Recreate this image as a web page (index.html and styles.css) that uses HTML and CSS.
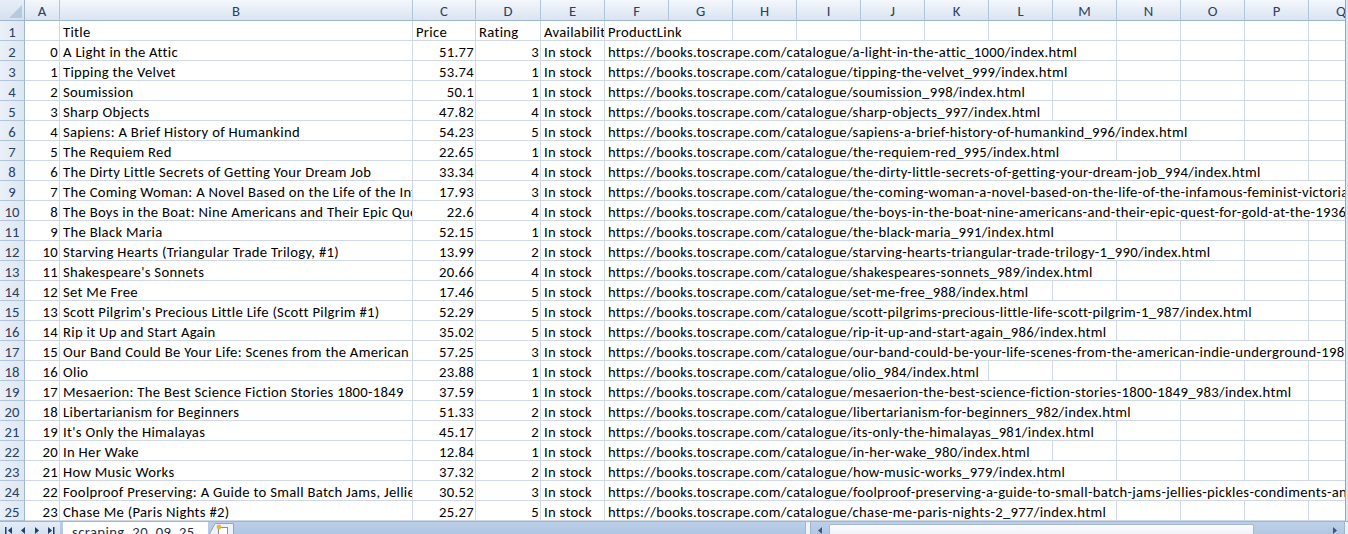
FILE: index.html
```html
<!DOCTYPE html>
<html>
<head>
<meta charset="utf-8">
<link rel="stylesheet" href="styles.css">
</head>
<body>
<div class="window">
  <div class="main">
    <div class="sheet">
      <div class="row head">
        <div class="corner"><span class="tri"></span></div>
        <div class="ch">A</div><div class="ch">B</div><div class="ch">C</div><div class="ch">D</div><div class="ch">E</div><div class="ch">F</div><div class="ch">G</div><div class="ch">H</div><div class="ch">I</div><div class="ch">J</div><div class="ch">K</div><div class="ch">L</div><div class="ch">M</div><div class="ch">N</div><div class="ch">O</div><div class="ch">P</div><div class="ch last">Q</div>
      </div>
      <div class="row"><div class="rh">1</div><div class="c num"></div><div class="c">Title</div><div class="c">Price</div><div class="c">Rating</div><div class="c">Availability</div><div class="rest"><span>ProductLink</span></div></div>
      <div class="row"><div class="rh">2</div><div class="c num">0</div><div class="c">A Light in the Attic</div><div class="c num">51.77</div><div class="c num">3</div><div class="c">In stock</div><div class="rest"><span>https://books.toscrape.com/catalogue/a-light-in-the-attic_1000/index.html</span></div></div>
      <div class="row"><div class="rh">3</div><div class="c num">1</div><div class="c">Tipping the Velvet</div><div class="c num">53.74</div><div class="c num">1</div><div class="c">In stock</div><div class="rest"><span>https://books.toscrape.com/catalogue/tipping-the-velvet_999/index.html</span></div></div>
      <div class="row"><div class="rh">4</div><div class="c num">2</div><div class="c">Soumission</div><div class="c num">50.1</div><div class="c num">1</div><div class="c">In stock</div><div class="rest"><span>https://books.toscrape.com/catalogue/soumission_998/index.html</span></div></div>
      <div class="row"><div class="rh">5</div><div class="c num">3</div><div class="c">Sharp Objects</div><div class="c num">47.82</div><div class="c num">4</div><div class="c">In stock</div><div class="rest"><span>https://books.toscrape.com/catalogue/sharp-objects_997/index.html</span></div></div>
      <div class="row"><div class="rh">6</div><div class="c num">4</div><div class="c">Sapiens: A Brief History of Humankind</div><div class="c num">54.23</div><div class="c num">5</div><div class="c">In stock</div><div class="rest"><span>https://books.toscrape.com/catalogue/sapiens-a-brief-history-of-humankind_996/index.html</span></div></div>
      <div class="row"><div class="rh">7</div><div class="c num">5</div><div class="c">The Requiem Red</div><div class="c num">22.65</div><div class="c num">1</div><div class="c">In stock</div><div class="rest"><span>https://books.toscrape.com/catalogue/the-requiem-red_995/index.html</span></div></div>
      <div class="row"><div class="rh">8</div><div class="c num">6</div><div class="c">The Dirty Little Secrets of Getting Your Dream Job</div><div class="c num">33.34</div><div class="c num">4</div><div class="c">In stock</div><div class="rest"><span>https://books.toscrape.com/catalogue/the-dirty-little-secrets-of-getting-your-dream-job_994/index.html</span></div></div>
      <div class="row"><div class="rh">9</div><div class="c num">7</div><div class="c">The Coming Woman: A Novel Based on the Life of the Infamous Feminist, Victoria Woodhull</div><div class="c num">17.93</div><div class="c num">3</div><div class="c">In stock</div><div class="rest"><span>https://books.toscrape.com/catalogue/the-coming-woman-a-novel-based-on-the-life-of-the-infamous-feminist-victoria-woodhull_993/index.html</span></div></div>
      <div class="row"><div class="rh">10</div><div class="c num">8</div><div class="c">The Boys in the Boat: Nine Americans and Their Epic Quest for Gold at the 1936 Berlin Olympics</div><div class="c num">22.6</div><div class="c num">4</div><div class="c">In stock</div><div class="rest"><span>https://books.toscrape.com/catalogue/the-boys-in-the-boat-nine-americans-and-their-epic-quest-for-gold-at-the-1936-berlin-olympics_992/index.html</span></div></div>
      <div class="row"><div class="rh">11</div><div class="c num">9</div><div class="c">The Black Maria</div><div class="c num">52.15</div><div class="c num">1</div><div class="c">In stock</div><div class="rest"><span>https://books.toscrape.com/catalogue/the-black-maria_991/index.html</span></div></div>
      <div class="row"><div class="rh">12</div><div class="c num">10</div><div class="c">Starving Hearts (Triangular Trade Trilogy, #1)</div><div class="c num">13.99</div><div class="c num">2</div><div class="c">In stock</div><div class="rest"><span>https://books.toscrape.com/catalogue/starving-hearts-triangular-trade-trilogy-1_990/index.html</span></div></div>
      <div class="row"><div class="rh">13</div><div class="c num">11</div><div class="c">Shakespeare's Sonnets</div><div class="c num">20.66</div><div class="c num">4</div><div class="c">In stock</div><div class="rest"><span>https://books.toscrape.com/catalogue/shakespeares-sonnets_989/index.html</span></div></div>
      <div class="row"><div class="rh">14</div><div class="c num">12</div><div class="c">Set Me Free</div><div class="c num">17.46</div><div class="c num">5</div><div class="c">In stock</div><div class="rest"><span>https://books.toscrape.com/catalogue/set-me-free_988/index.html</span></div></div>
      <div class="row"><div class="rh">15</div><div class="c num">13</div><div class="c">Scott Pilgrim's Precious Little Life (Scott Pilgrim #1)</div><div class="c num">52.29</div><div class="c num">5</div><div class="c">In stock</div><div class="rest"><span>https://books.toscrape.com/catalogue/scott-pilgrims-precious-little-life-scott-pilgrim-1_987/index.html</span></div></div>
      <div class="row"><div class="rh">16</div><div class="c num">14</div><div class="c">Rip it Up and Start Again</div><div class="c num">35.02</div><div class="c num">5</div><div class="c">In stock</div><div class="rest"><span>https://books.toscrape.com/catalogue/rip-it-up-and-start-again_986/index.html</span></div></div>
      <div class="row"><div class="rh">17</div><div class="c num">15</div><div class="c">Our Band Could Be Your Life: Scenes from the American Indie Underground, 1981-1991</div><div class="c num">57.25</div><div class="c num">3</div><div class="c">In stock</div><div class="rest"><span>https://books.toscrape.com/catalogue/our-band-could-be-your-life-scenes-from-the-american-indie-underground-1981-1991_985/index.html</span></div></div>
      <div class="row"><div class="rh">18</div><div class="c num">16</div><div class="c">Olio</div><div class="c num">23.88</div><div class="c num">1</div><div class="c">In stock</div><div class="rest"><span>https://books.toscrape.com/catalogue/olio_984/index.html</span></div></div>
      <div class="row"><div class="rh">19</div><div class="c num">17</div><div class="c">Mesaerion: The Best Science Fiction Stories 1800-1849</div><div class="c num">37.59</div><div class="c num">1</div><div class="c">In stock</div><div class="rest"><span>https://books.toscrape.com/catalogue/mesaerion-the-best-science-fiction-stories-1800-1849_983/index.html</span></div></div>
      <div class="row"><div class="rh">20</div><div class="c num">18</div><div class="c">Libertarianism for Beginners</div><div class="c num">51.33</div><div class="c num">2</div><div class="c">In stock</div><div class="rest"><span>https://books.toscrape.com/catalogue/libertarianism-for-beginners_982/index.html</span></div></div>
      <div class="row"><div class="rh">21</div><div class="c num">19</div><div class="c">It's Only the Himalayas</div><div class="c num">45.17</div><div class="c num">2</div><div class="c">In stock</div><div class="rest"><span>https://books.toscrape.com/catalogue/its-only-the-himalayas_981/index.html</span></div></div>
      <div class="row"><div class="rh">22</div><div class="c num">20</div><div class="c">In Her Wake</div><div class="c num">12.84</div><div class="c num">1</div><div class="c">In stock</div><div class="rest"><span>https://books.toscrape.com/catalogue/in-her-wake_980/index.html</span></div></div>
      <div class="row"><div class="rh">23</div><div class="c num">21</div><div class="c">How Music Works</div><div class="c num">37.32</div><div class="c num">2</div><div class="c">In stock</div><div class="rest"><span>https://books.toscrape.com/catalogue/how-music-works_979/index.html</span></div></div>
      <div class="row"><div class="rh">24</div><div class="c num">22</div><div class="c">Foolproof Preserving: A Guide to Small Batch Jams, Jellies, Pickles, Condiments, and More</div><div class="c num">30.52</div><div class="c num">3</div><div class="c">In stock</div><div class="rest"><span>https://books.toscrape.com/catalogue/foolproof-preserving-a-guide-to-small-batch-jams-jellies-pickles-condiments-and-more_978/index.html</span></div></div>
      <div class="row"><div class="rh">25</div><div class="c num">23</div><div class="c">Chase Me (Paris Nights #2)</div><div class="c num">25.27</div><div class="c num">5</div><div class="c">In stock</div><div class="rest"><span>https://books.toscrape.com/catalogue/chase-me-paris-nights-2_977/index.html</span></div></div>
    </div>
    <div class="vscroll"></div>
  </div>
  <div class="tabbar">
    <div class="nav">
      <svg width="60" height="14" viewBox="0 0 60 14">
        <rect x="5" y="5" width="1.5" height="7" fill="#1f3f6e"/>
        <path d="M12 5 L8 8.5 L12 12 Z" fill="#1f3f6e"/>
        <path d="M25 5 L21 8.5 L25 12 Z" fill="#1f3f6e"/>
        <path d="M35 5 L39 8.5 L35 12 Z" fill="#1f3f6e"/>
        <path d="M48 5 L52 8.5 L48 12 Z" fill="#1f3f6e"/>
        <rect x="53" y="5" width="1.5" height="7" fill="#1f3f6e"/>
      </svg>
    </div>
    <div class="tab">scraping_20_09_25</div>
    <div class="newtab">
      <svg width="26" height="14" viewBox="0 0 26 14">
        <path d="M0.5 14 L7 1.5 L25.5 1.5 L25.5 14" fill="#eef3fa" stroke="#8ea6c6" stroke-width="1"/>
        <rect x="10.5" y="5.5" width="9" height="9" fill="#fff" stroke="#7d8fa8"/>
        <circle cx="11" cy="5" r="2.4" fill="#f3b13a"/>
      </svg>
    </div>
    <div class="tabfill"></div>
    <div class="split"></div>
    <div class="hscroll">
      <div class="arrow">
        <svg width="12" height="12" viewBox="0 0 12 12"><path d="M8 3 L4 6.5 L8 10 Z" fill="#3b5680"/></svg>
      </div>
      <div class="thumb"></div>
      <div class="track"></div>
      <div class="arrow">
        <svg width="12" height="12" viewBox="0 0 12 12"><path d="M4 3 L8 6.5 L4 10 Z" fill="#3b5680"/></svg>
      </div>
    </div>
    <div class="corner2"></div>
  </div>
</div>
</body>
</html>
```
FILE: styles.css
```css
html, body {
  margin: 0;
  padding: 0;
  background: #ffffff;
}
body {
  width: 1348px;
  height: 534px;
  overflow: hidden;
  font-family: Carlito, "Lato", "Liberation Sans", sans-serif;
  font-size: 14.67px;
  letter-spacing: 0.3px;
  color: #000;
}
.window {
  display: flex;
  flex-direction: column;
  width: 1348px;
}
.main {
  display: flex;
  height: 521px;
  overflow: hidden;
  flex: none;
}
.sheet {
  width: 1345px;
  display: flex;
  flex-direction: column;
  flex: none;
}
.vscroll {
  width: 3px;
  border-left: 1px solid #8fa5c3;
  background: linear-gradient(to right, #e6edf7, #d4dfee);
  box-sizing: border-box;
  flex: none;
}
.row {
  display: grid;
  grid-template-columns: 25px 35px 353px 63px 65px 64px 64px 64px 64px 64px 64px 64px 64px 64px 64px 64px 64px 36px;
  grid-template-rows: 20px;
  height: 20px;
  flex: none;
}
.row.head {
  height: 21px;
  grid-template-rows: 21px;
}
.corner {
  background: linear-gradient(#e6eef8, #d6e1ef);
  border-right: 1px solid #9eb6ce;
  border-bottom: 1px solid #9eb6ce;
  position: relative;
}
.tri {
  position: absolute;
  right: 2px;
  bottom: 2px;
  width: 0;
  height: 0;
  border-left: 13px solid transparent;
  border-bottom: 13px solid #b7c9df;
}
.ch {
  background: linear-gradient(#f4f7fc, #dae4f1);
  border-right: 1px solid #b1c5da;
  border-bottom: 1px solid #9eb6ce;
  color: #27415f;
  text-align: center;
  line-height: 20px;
  padding-top: 1px;
  overflow: hidden;
  white-space: nowrap;
  letter-spacing: 0;
}
.ch.last {
  border-right: none;
  text-align: left;
  padding-left: 27px;
}
.rh {
  background: linear-gradient(to right, #eaf0f8, #dde6f2);
  border-right: 1px solid #9eb6ce;
  border-bottom: 1px solid #b1c5da;
  color: #27415f;
  text-align: center;
  line-height: 20px;
  padding-top: 1px;
  letter-spacing: 0;
}
.c {
  border-right: 1px solid #d0d7e5;
  border-bottom: 1px solid #d0d7e5;
  padding: 1px 2px 0 3px;
  line-height: 20px;
  white-space: nowrap;
  overflow: hidden;
}
.c.num {
  text-align: right;
  padding-right: 1px;
}
.rest {
  grid-column: 7 / 19;
  border-bottom: 1px solid #d0d7e5;
  background: repeating-linear-gradient(to right, transparent 0, transparent 63px, #d0d7e5 63px, #d0d7e5 64px);
  white-space: nowrap;
  overflow: hidden;
  line-height: 20px;
}
.rest span {
  background: #fff;
  padding: 1px 2px 0 3px;
  display: inline-block;
  height: 19px;
  box-sizing: border-box;
  vertical-align: top;
}
.tabbar {
  display: flex;
  height: 18px;
  background: linear-gradient(#bccfe8, #a9c0de);
  border-top: 1px solid #9eb6ce;
  flex: none;
}
.nav {
  width: 60px;
  background: linear-gradient(#e4ecf7, #cfdcee);
  flex: none;
}
.nav svg {
  display: block;
}
.tab {
  width: 145px;
  padding-left: 9px;
  margin-left: 3px;
  background: #ffffff;
  color: #1e2f4a;
  line-height: 16px;
  box-sizing: border-box;
  flex: none;
  padding-top: 2px;
  letter-spacing: 0.4px;
}
.newtab {
  width: 26px;
  flex: none;
}
.newtab svg {
  display: block;
}
.tabfill {
  width: 571px;
  flex: none;
}
.split {
  width: 4px;
  background: #eef3fa;
  border-left: 1px solid #9eb6ce;
  border-right: 1px solid #9eb6ce;
  flex: none;
}
.hscroll {
  display: flex;
  flex: 1;
  background: linear-gradient(#bed0e8, #adc3e0);
}
.arrow {
  width: 18px;
  display: flex;
  align-items: flex-start;
  justify-content: center;
  padding-top: 2px;
  flex: none;
}
.thumb {
  width: 425px;
  background: linear-gradient(#fbfcfe, #e9eff8);
  border: 1px solid #a4b8d4;
  border-radius: 2px;
  box-sizing: border-box;
  margin-top: 2px;
  flex: none;
}
.track {
  flex: 1;
}
.corner2 {
  width: 3px;
  background: #eef3fa;
  border-left: 1px solid #9eb6ce;
  flex: none;
}
```
